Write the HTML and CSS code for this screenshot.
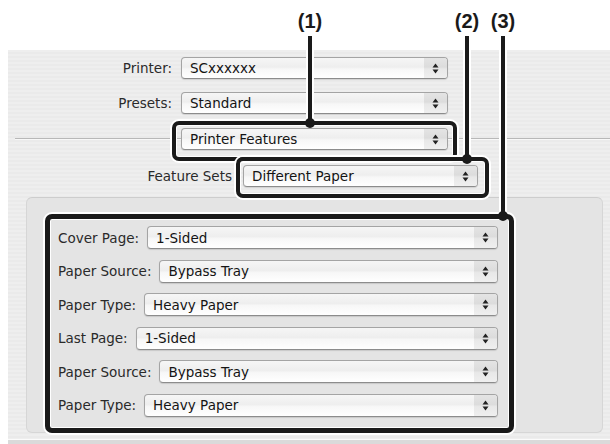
FILE: index.html
```html
<!DOCTYPE html>
<html lang="en">
  <head>
    <meta charset="UTF-8" />
    <meta name="viewport" content="width=device-width, initial-scale=1.0" />
    <title>Printer Features</title>
    <link rel="stylesheet" href="styles.css">
  </head>
  <body>
    <div class="page">
      <div class="top-space"></div>

      <div class="window">
        <div class="top-fields">
          <span class="label">Printer:</span>
          <div class="popup">
            <span class="value">SCxxxxxx</span>
            <span class="stepper"><svg width="7" height="11" viewBox="0 0 7 11"><path d="M3.5 0.5 L6.5 4.5 L0.5 4.5 Z M3.5 10.5 L6.5 6.5 L0.5 6.5 Z" fill="#222"/></svg></span>
          </div>

          <span class="label">Presets:</span>
          <div class="popup">
            <span class="value">Standard</span>
            <span class="stepper"><svg width="7" height="11" viewBox="0 0 7 11"><path d="M3.5 0.5 L6.5 4.5 L0.5 4.5 Z M3.5 10.5 L6.5 6.5 L0.5 6.5 Z" fill="#222"/></svg></span>
          </div>
        </div>

        <div class="pane-row">
          <div class="rule rule-left"></div>
          <div class="popup pane-popup">
            <span class="value">Printer Features</span>
            <span class="stepper"><svg width="7" height="11" viewBox="0 0 7 11"><path d="M3.5 0.5 L6.5 4.5 L0.5 4.5 Z M3.5 10.5 L6.5 6.5 L0.5 6.5 Z" fill="#222"/></svg></span>
          </div>
          <div class="rule rule-right"></div>
        </div>

        <div class="sets-row">
          <span class="label sets-label">Feature Sets</span>
          <div class="popup sets-popup">
            <span class="value">Different Paper</span>
            <span class="stepper"><svg width="7" height="11" viewBox="0 0 7 11"><path d="M3.5 0.5 L6.5 4.5 L0.5 4.5 Z M3.5 10.5 L6.5 6.5 L0.5 6.5 Z" fill="#222"/></svg></span>
          </div>
        </div>

        <div class="group">
          <div class="row">
            <span class="label">Cover Page:</span>
            <div class="popup">
              <span class="value">1-Sided</span>
              <span class="stepper"><svg width="7" height="11" viewBox="0 0 7 11"><path d="M3.5 0.5 L6.5 4.5 L0.5 4.5 Z M3.5 10.5 L6.5 6.5 L0.5 6.5 Z" fill="#222"/></svg></span>
            </div>
          </div>
          <div class="row">
            <span class="label">Paper Source:</span>
            <div class="popup">
              <span class="value">Bypass Tray</span>
              <span class="stepper"><svg width="7" height="11" viewBox="0 0 7 11"><path d="M3.5 0.5 L6.5 4.5 L0.5 4.5 Z M3.5 10.5 L6.5 6.5 L0.5 6.5 Z" fill="#222"/></svg></span>
            </div>
          </div>
          <div class="row">
            <span class="label">Paper Type:</span>
            <div class="popup">
              <span class="value">Heavy Paper</span>
              <span class="stepper"><svg width="7" height="11" viewBox="0 0 7 11"><path d="M3.5 0.5 L6.5 4.5 L0.5 4.5 Z M3.5 10.5 L6.5 6.5 L0.5 6.5 Z" fill="#222"/></svg></span>
            </div>
          </div>
          <div class="row">
            <span class="label">Last Page:</span>
            <div class="popup">
              <span class="value">1-Sided</span>
              <span class="stepper"><svg width="7" height="11" viewBox="0 0 7 11"><path d="M3.5 0.5 L6.5 4.5 L0.5 4.5 Z M3.5 10.5 L6.5 6.5 L0.5 6.5 Z" fill="#222"/></svg></span>
            </div>
          </div>
          <div class="row">
            <span class="label">Paper Source:</span>
            <div class="popup">
              <span class="value">Bypass Tray</span>
              <span class="stepper"><svg width="7" height="11" viewBox="0 0 7 11"><path d="M3.5 0.5 L6.5 4.5 L0.5 4.5 Z M3.5 10.5 L6.5 6.5 L0.5 6.5 Z" fill="#222"/></svg></span>
            </div>
          </div>
          <div class="row">
            <span class="label">Paper Type:</span>
            <div class="popup">
              <span class="value">Heavy Paper</span>
              <span class="stepper"><svg width="7" height="11" viewBox="0 0 7 11"><path d="M3.5 0.5 L6.5 4.5 L0.5 4.5 Z M3.5 10.5 L6.5 6.5 L0.5 6.5 Z" fill="#222"/></svg></span>
            </div>
          </div>
        </div>

        <div class="bottom-bar"></div>
      </div>

      <!-- callout overlay -->
      <div class="callout-num num-1">(1)</div>
      <div class="callout-num num-2">(2)</div>
      <div class="callout-num num-3">(3)</div>

      <div class="lead lead-1"></div>
      <div class="lead lead-2"></div>
      <div class="lead lead-3"></div>

      <div class="callout-box box-1"></div>
      <div class="callout-box box-2"></div>
      <div class="callout-box box-3"></div>

      <div class="dot dot-1"></div>
      <div class="dot dot-2"></div>
      <div class="dot dot-3"></div>
    </div>
  </body>
</html>
```

FILE: styles.css
```css
body {
  margin: 0;
  padding: 0;
  background: #fff;
  font-family: "DejaVu Sans", "Liberation Sans", sans-serif;
  font-size: 13.5px;
  color: #1c1c1c;
}

.page {
  position: relative;
  width: 610px;
  height: 444px;
  overflow: hidden;
}

.top-space {
  height: 50px;
}

.window {
  margin-left: 8px;
  height: 394px;
  background: repeating-linear-gradient(#eeeeee 0, #eeeeee 2px, #eaeaea 2px, #eaeaea 4px);
  display: flex;
  flex-direction: column;
}

.label {
  color: #2a2a2a;
  white-space: nowrap;
}

/* popup buttons */
.popup {
  display: flex;
  align-items: center;
  height: 22px;
  box-sizing: border-box;
  border: 1px solid #a4a4a4;
  border-bottom-color: #8c8c8c;
  border-radius: 4px;
  background: linear-gradient(#f6f6f6 0%, #eeeeee 45%, #f7f7f7 55%, #ffffff 100%);
  box-shadow: 0 1px 1px rgba(0, 0, 0, 0.12);
  overflow: hidden;
}

.popup .value {
  flex: 1;
  padding-left: 8px;
  color: #141414;
  white-space: nowrap;
}

.popup .stepper {
  width: 23px;
  align-self: stretch;
  display: flex;
  align-items: center;
  justify-content: center;
  background: linear-gradient(#e4e4e4 0%, #dcdcdc 45%, #e8e8e8 55%, #efefef 100%);
}

.top-fields {
  display: grid;
  grid-template-columns: 164px 267px;
  column-gap: 9px;
  row-gap: 13px;
  align-items: center;
  padding-top: 7px;
}

.top-fields .label {
  text-align: right;
}

.pane-row {
  display: flex;
  align-items: center;
  margin-top: 14px;
}

.rule {
  height: 1px;
  background: #b8b8b8;
  border-bottom: 1px solid #f8f8f8;
}

.rule-left {
  width: 166px;
  margin-left: 7px;
}

.pane-popup {
  width: 267px;
}

.rule-right {
  flex: 1;
}

.sets-row {
  display: flex;
  align-items: center;
  margin-top: 15px;
}

.sets-label {
  width: 224px;
  text-align: right;
  margin-right: 11px;
}

.sets-popup {
  width: 235px;
}

.group {
  margin: 10px 7px 0 18px;
  height: 236px;
  box-sizing: border-box;
  padding: 28px 104px 0 31px;
  background: #e4e4e4;
  border: 1px solid #d6d6d6;
  border-top-color: #cdcdcd;
  border-radius: 6px;
  display: flex;
  flex-direction: column;
  gap: 10.5px;
}

.group .row {
  display: flex;
  align-items: center;
  gap: 8px;
}

.group .popup {
  flex: 1;
  height: 23px;
}

.bottom-bar {
  margin-top: 6px;
  flex: 1;
  border-top: 1px solid #fbfbfb;
  background: #dadada;
}

/* callouts */
.callout-num {
  position: absolute;
  top: 11px;
  width: 40px;
  margin-left: -20px;
  text-align: center;
  font-family: "Liberation Sans", Arial, sans-serif;
  font-weight: bold;
  font-size: 20px;
  line-height: 20px;
  color: #1a1a1a;
}

.num-1 { left: 310px; }
.num-2 { left: 467px; }
.num-3 { left: 503px; }

.lead {
  position: absolute;
  top: 36px;
  width: 4px;
  margin-left: -2px;
  background: #1a1a1a;
  box-shadow: 0 0 0 2px #fff;
}

.lead-1 { left: 310px; height: 88px; }
.lead-2 { left: 467px; height: 124px; }
.lead-3 { left: 503px; height: 181px; }

.callout-box {
  position: absolute;
  box-sizing: border-box;
  border: 4px solid #1a1a1a;
  border-radius: 7px;
  box-shadow: 0 0 0 2px #fff, inset 0 0 0 1px #fff;
}

.box-1 { left: 172px; top: 121px; width: 285px; height: 40px; }
.box-2 { left: 236px; top: 157px; width: 253px; height: 41px; }
.box-3 { left: 45px; top: 214px; width: 469px; height: 219px; border-width: 5px; }

.dot {
  position: absolute;
  width: 10px;
  height: 10px;
  margin: -5px 0 0 -5px;
  border-radius: 50%;
  background: #1a1a1a;
}

.dot-1 { left: 310px; top: 123px; }
.dot-2 { left: 467px; top: 159px; }
.dot-3 { left: 503px; top: 216px; }
```
